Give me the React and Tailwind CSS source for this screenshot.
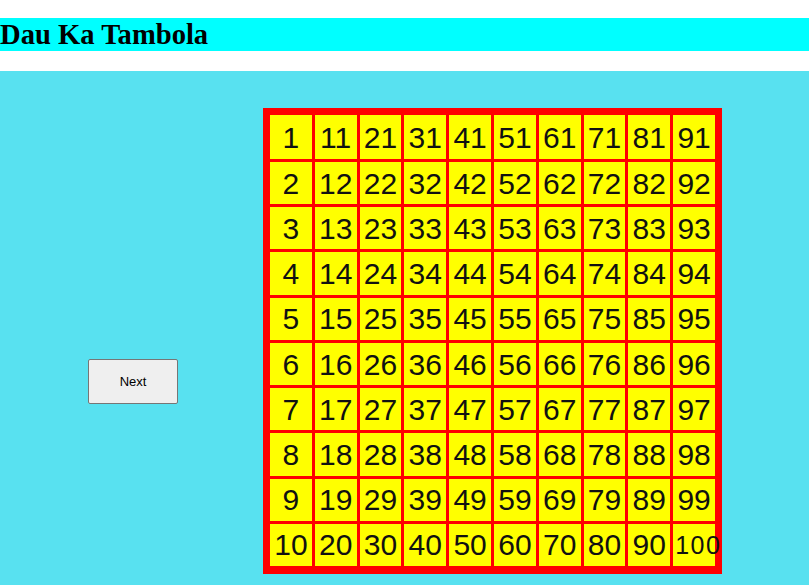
import React from "react";

export default function App() {
  const rows = Array.from({ length: 10 }, (_, r) => r);
  const cols = Array.from({ length: 10 }, (_, c) => c);
  return (
    <div className="w-full min-h-screen bg-white">
      <div className="pt-[18px] pb-[20px]">
        <h1
          className="m-0 h-[33px] bg-[#00ffff] text-[28.6px] leading-[33px] font-bold text-black"
          style={{ fontFamily: '"Liberation Serif", "Times New Roman", serif' }}
        >
          Dau Ka Tambola
        </h1>
      </div>
      <div className="flex items-start bg-[#58e1f0] min-h-[514px] pt-[37px] pl-[88px]">
        <button
          className="mt-[251px] w-[90px] h-[45px] bg-[#efefef] border border-[#767676] rounded-[2px] text-[13px] text-black flex items-center justify-center"
          style={{ fontFamily: '"Liberation Sans", Arial, sans-serif' }}
        >
          Next
        </button>
        <div
          className="ml-[85px] w-[459px] bg-[#ff0000] pt-[7px] pl-[7px] pr-[7px] pb-[8px]"
          style={{ fontFamily: '"Liberation Sans", Arial, sans-serif' }}
        >
          <div className="grid h-[451px] grid-cols-10 grid-rows-[44px_repeat(9,minmax(0,1fr))] gap-[3px]">
            {rows.map((r) =>
              cols.map((c) => {
                const n = c * 10 + r + 1;
                const isHundred = n === 100;
                return (
                  <div
                    key={n}
                    className={
                      isHundred
                        ? "relative z-10 bg-[#ffff00] flex items-center justify-start pl-[2px] pt-[2px] overflow-visible whitespace-nowrap text-[25px] tracking-[1.5px] text-[#111]"
                        : "bg-[#ffff00] flex items-center justify-center whitespace-nowrap text-[30px] text-[#111]"
                    }
                  >
                    {n}
                  </div>
                );
              })
            )}
          </div>
        </div>
      </div>
    </div>
  );
}
